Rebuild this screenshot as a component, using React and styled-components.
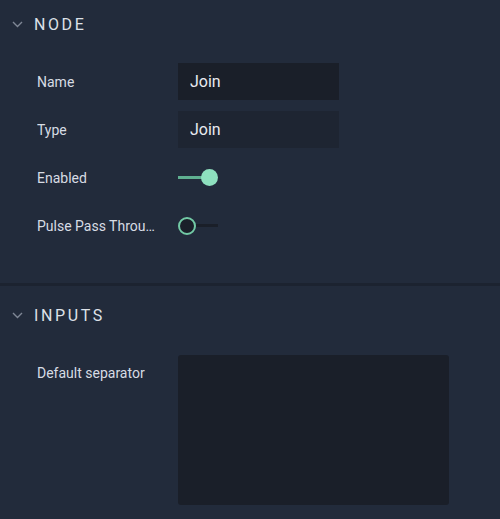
import React from 'react'
import styled, { createGlobalStyle } from 'styled-components'

const GlobalStyle = createGlobalStyle`
	body {
		margin: 0;
		background: #222b3b;
		font-family: Roboto, "Liberation Sans", sans-serif;
	}
`

const Chevron = () => (
	<svg width="11" height="7" viewBox="0 0 11 7" fill="none">
		<path d="M1 1l4.5 4.5L10 1" stroke="#7f8795" strokeWidth="1.4" />
	</svg>
)

const Toggle = ({ on }) => (
	<ToggleWrap>
		{on ? (
			<>
				<Track $on />
				<Thumb $on />
			</>
		) : (
			<>
				<Thumb />
				<Track />
			</>
		)}
	</ToggleWrap>
)

const Section = ({ title, top, bottom, children }) => (
	<SectionBox $top={top} $bottom={bottom}>
		<Header>
			<Chevron />
			<HeaderTitle>{title}</HeaderTitle>
		</Header>
		<Body>{children}</Body>
	</SectionBox>
)

const App = () => {
	return (
		<Panel>
			<GlobalStyle />
			<Section title="NODE" top={0} bottom={39}>
				<Row>
					<Label>Name</Label>
					<TextInput value="Join" readOnly />
				</Row>
				<Row>
					<Label>Type</Label>
					<TextInput value="Join" readOnly $disabled />
				</Row>
				<Row>
					<Label>Enabled</Label>
					<Toggle on />
				</Row>
				<Row>
					<Label>Pulse Pass Through</Label>
					<Toggle />
				</Row>
			</Section>
			<Divider />
			<Section title="INPUTS" top={5} bottom={15}>
				<Row $top>
					<Label>Default separator</Label>
					<TextArea />
				</Row>
			</Section>
		</Panel>
	)
}

export default App

const Panel = styled.div`
	width: 500px;
	min-height: 519px;
	display: flex;
	flex-direction: column;
	background: #222b3b;
`

const SectionBox = styled.div`
	padding-top: ${props => props.$top}px;
	padding-bottom: ${props => props.$bottom}px;
`

const Header = styled.div`
	height: 48px;
	display: flex;
	align-items: center;
	gap: 11px;
	padding-left: 12px;
	padding-top: 1px;
	box-sizing: border-box;
`

const HeaderTitle = styled.span`
	font-size: 16px;
	letter-spacing: 2.6px;
	color: #dde1e8;
`

const Body = styled.div`
	display: flex;
	flex-direction: column;
	gap: 11px;
	padding: 15px 0 0 37px;
`

const Row = styled.div`
	display: flex;
	align-items: ${props => (props.$top ? 'flex-start' : 'center')};
	min-height: 37px;
`

const Label = styled.div`
	width: 120px;
	margin-right: 21px;
	height: 37px;
	line-height: 38px;
	font-size: 14px;
	color: #d7dce4;
	white-space: nowrap;
	overflow: hidden;
	text-overflow: ellipsis;
`

const TextInput = styled.input`
	box-sizing: border-box;
	width: 161px;
	height: 37px;
	padding: 0 12px;
	border: none;
	outline: none;
	background: ${props => (props.$disabled ? '#1e2532' : '#1a1f29')};
	color: #e8ebf0;
	font-family: Roboto, "Liberation Sans", sans-serif;
	font-size: 16px;
`

const TextArea = styled.div`
	width: 271px;
	height: 150px;
	margin-top: 1px;
	border-radius: 3px;
	background: #1a1f29;
`

const ToggleWrap = styled.div`
	width: 40px;
	height: 18px;
	display: flex;
	align-items: center;
`

const Track = styled.div`
	flex: 1;
	height: 3px;
	margin: ${props => (props.$on ? '0 -2px 0 0' : '0')};
	background: ${props => (props.$on ? '#5fb091' : '#1a1f29')};
`

const Thumb = styled.div`
	box-sizing: border-box;
	width: ${props => (props.$on ? '17px' : '18px')};
	height: ${props => (props.$on ? '17px' : '18px')};
	border-radius: 50%;
	background: ${props => (props.$on ? '#8ee0bf' : '#1a1f29')};
	border: ${props => (props.$on ? 'none' : '2.5px solid #72c9a5')};
	position: relative;
`

const Divider = styled.div`
	height: 3px;
	background: #1c2330;
`
